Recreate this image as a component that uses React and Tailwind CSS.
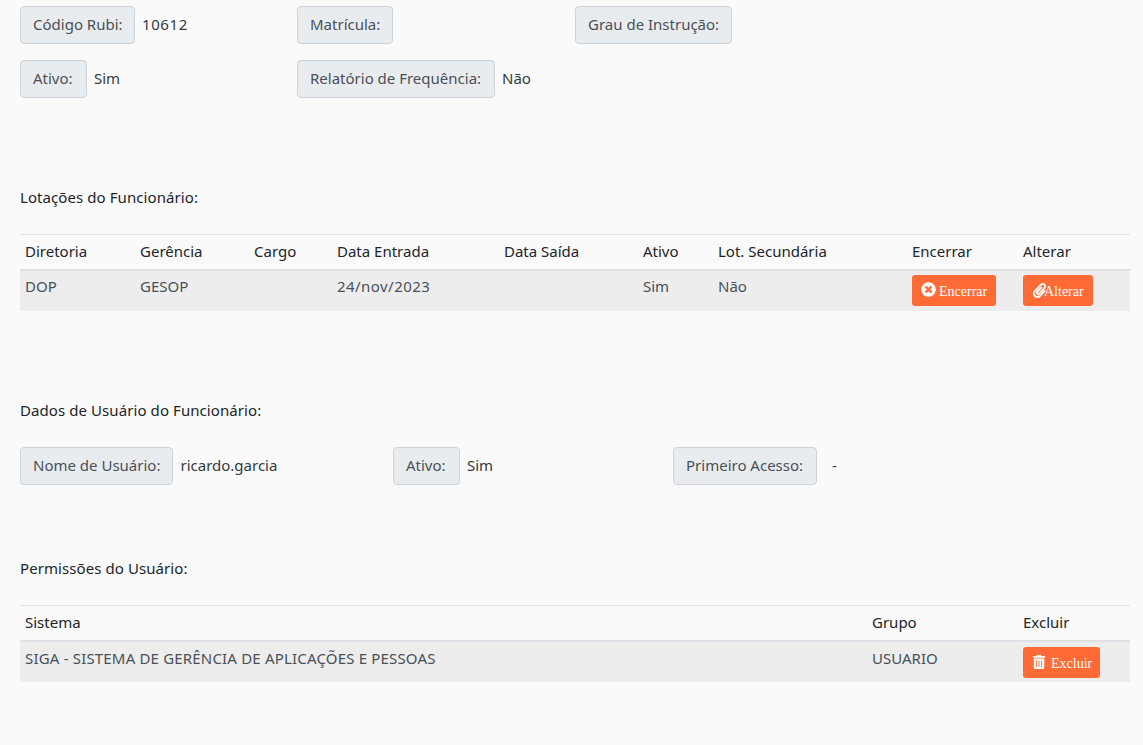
import { FaTimesCircle, FaPaperclip, FaTrashAlt } from 'react-icons/fa';

function Field({ label, value, className = '', labelClass = '', valueClass = 'ml-[7px]', lift = 'pb-[2px]' }) {
  return (
    <div className={`flex items-center ${className}`}>
      <span className={`h-[38px] flex items-center px-3 ${lift} bg-[#e9ecef] border border-[#ced4da] rounded-[4px] text-[#495057] whitespace-nowrap ${labelClass}`}>
        {label}
      </span>
      {value && <span className={`${lift} text-[#343a40] ${valueClass}`}>{value}</span>}
    </div>
  );
}

function ActionButton({ icon, children, className = '' }) {
  return (
    <button className={`h-[31px] flex items-center rounded-[3px] bg-[#ff6a35] text-white text-[14px] font-['Liberation_Serif',serif] ${className}`}>
      {icon}
      <span className="pt-[2px]">{children}</span>
    </button>
  );
}

const lotacoesCols = [
  ['Diretoria', 'w-[115px]'],
  ['Gerência', 'w-[114px]'],
  ['Cargo', 'w-[83px]'],
  ['Data Entrada', 'w-[167px]'],
  ['Data Saída', 'w-[139px]'],
  ['Ativo', 'w-[75px]'],
  ['Lot. Secundária', 'w-[194px]'],
  ['Encerrar', 'w-[111px]'],
  ['Alterar', 'w-[112px]'],
];

const permissoesCols = [
  ['Sistema', 'w-[847px]'],
  ['Grupo', 'w-[151px]'],
  ['Excluir', 'w-[112px]'],
];

function HeaderRow({ cols, height }) {
  return (
    <thead>
      <tr className={`${height} border-t border-b-2 border-[#dee2e6]`}>
        {cols.map(([name, width]) => (
          <th key={name} className={`${width} px-[5px] pb-[2px] text-left font-normal text-[#212529]`}>
            {name}
          </th>
        ))}
      </tr>
    </thead>
  );
}

const cell = 'px-[5px] pt-[4px]';
const cellLow = 'px-[5px] pt-[5px]';

export default function App() {
  return (
    <div className="min-h-[745px] bg-[#fafafa] pl-5 pr-[13px] pt-[6px] text-[15px] font-['Noto_Sans',sans-serif]">
      <div className="flex h-[38px]">
        <Field className="w-[277px]" labelClass="w-[115px]" label="Código Rubi:" value="10612" valueClass="ml-[7px] tracking-[0.6px]" />
        <Field className="w-[278px]" label="Matrícula:" />
        <Field label="Grau de Instrução:" />
      </div>
      <div className="flex h-[38px] mt-4">
        <Field className="w-[277px]" labelClass="w-[67px]" label="Ativo:" value="Sim" />
        <Field labelClass="w-[198px]" label="Relatório de Frequência:" value="Não" />
      </div>

      <h2 className="mt-[88px] leading-[22px] tracking-[0.08px] text-[#212529]">Lotações do Funcionário:</h2>

      <table className="mt-[26px] w-[1110px] table-fixed border-collapse">
        <HeaderRow cols={lotacoesCols} height="h-[35px]" />
        <tbody>
          <tr className="h-[41px] bg-[#ededed] text-[#495057] align-top">
            <td className={cell}>DOP</td>
            <td className={cell}>GESOP</td>
            <td className={cell}></td>
            <td className={`${cell} tracking-[0.45px]`}>24/nov/2023</td>
            <td className={cell}></td>
            <td className={cell}>Sim</td>
            <td className={cell}>Não</td>
            <td className={cell}>
              <ActionButton className="w-[84px] pl-[9px]" icon={<FaTimesCircle className="mr-[3px] text-[15px] -translate-y-[1px]" />}>
                Encerrar
              </ActionButton>
            </td>
            <td className={cell}>
              <ActionButton className="w-[70px] pl-[9px]" icon={<FaPaperclip className="-mr-[3px] text-[15px]" />}>
                Alterar
              </ActionButton>
            </td>
          </tr>
        </tbody>
      </table>

      <h2 className="mt-[88px] leading-[22px] tracking-[0.08px] text-[#212529]">Dados de Usuário do Funcionário:</h2>

      <div className="flex h-[38px] mt-[26px]">
        <Field className="w-[373px]" lift="pb-0" label="Nome de Usuário:" value="ricardo.garcia" />
        <Field className="w-[280px]" lift="pb-0" labelClass="w-[67px]" label="Ativo:" value="Sim" />
        <Field lift="pb-0" labelClass="w-[144px]" label="Primeiro Acesso:" value="-" valueClass="ml-[15px]" />
      </div>

      <h2 className="mt-[72px] leading-[22px] tracking-[0.08px] text-[#212529]">Permissões do Usuário:</h2>

      <table className="mt-[26px] w-[1110px] table-fixed border-collapse">
        <HeaderRow cols={permissoesCols} height="h-[36px]" />
        <tbody>
          <tr className="h-[41px] bg-[#ededed] text-[#495057] align-top">
            <td className={`${cellLow} tracking-[0.18px]`}>SIGA - SISTEMA DE GERÊNCIA DE APLICAÇÕES E PESSOAS</td>
            <td className={cellLow}>USUARIO</td>
            <td className={cellLow}>
              <ActionButton className="w-[77px] pl-[9px]" icon={<FaTrashAlt className="mr-[5px] text-[14px] -translate-y-[1px]" />}>
                Excluir
              </ActionButton>
            </td>
          </tr>
        </tbody>
      </table>
    </div>
  );
}
